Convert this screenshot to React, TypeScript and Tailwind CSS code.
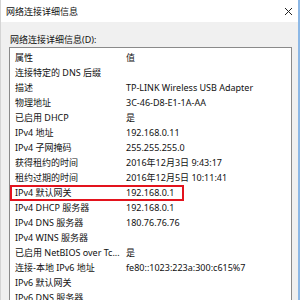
const rows: [string, string][] = [
  ["连接特定的 DNS 后缀", ""],
  ["描述", "TP-LINK Wireless USB Adapter"],
  ["物理地址", "3C-46-D8-E1-1A-AA"],
  ["已启用 DHCP", "是"],
  ["IPv4 地址", "192.168.0.11"],
  ["IPv4 子网掩码", "255.255.255.0"],
  ["获得租约的时间", "2016年12月3日 9:43:17"],
  ["租约过期的时间", "2016年12月5日 10:11:41"],
  ["IPv4 默认网关", "192.168.0.1"],
  ["IPv4 DHCP 服务器", "192.168.0.1"],
  ["IPv4 DNS 服务器", "180.76.76.76"],
  ["IPv4 WINS 服务器", ""],
  ["已启用 NetBIOS over Tc...", "是"],
  ["连接-本地 IPv6 地址", "fe80::1023:223a:300:c615%7"],
  ["IPv6 默认网关", ""],
  ["IPv6 DNS 服务器", ""],
  ["IPv6 WINS 服务器", ""],
];

const font = { fontFamily: '"Noto Sans", "Noto Sans CJK SC", sans-serif' };

export default function App() {
  return (
    <div
      className="w-[300px] h-[300px] overflow-hidden flex flex-col bg-[#f0f0f0] border-l border-[#d4d4d4] border-r-2 border-r-[#8cb8e6] text-[9px] text-[#111]"
      style={font}
    >
      <div className="h-[22px] shrink-0 bg-white flex items-center justify-between pl-[5px] pr-[4px]">
        <span className="leading-none">网络连接详细信息</span>
        <svg width="9" height="9" viewBox="0 0 9 9" className="mr-[1px]">
          <path d="M1 1 L8 8 M8 1 L1 8" stroke="#222" strokeWidth="1" />
        </svg>
      </div>
      <div className="flex flex-col pl-[8px] pr-[6px]">
        <div className="h-[25px] flex items-end pb-[3px] pl-[1px] leading-none">网络连接详细信息(D):</div>
        <div className="border border-[#8a8a8a] bg-white pt-[2px] h-[260px]">
          <div className="h-[15px] flex items-center pl-[5px]">
            <span className="w-[111px]">属性</span>
            <span>值</span>
          </div>
          {rows.map(([k, v], i) => (
            <div key={i} className="relative h-[15px] flex items-center pl-[5px] whitespace-nowrap">
              <span className="w-[111px]">{k}</span>
              <span>{v}</span>
              {k === "IPv4 默认网关" && (
                <div className="absolute left-0 top-0 w-[174px] h-[16px] border-2 border-[#e3131d]" />
              )}
            </div>
          ))}
        </div>
      </div>
    </div>
  );
}
